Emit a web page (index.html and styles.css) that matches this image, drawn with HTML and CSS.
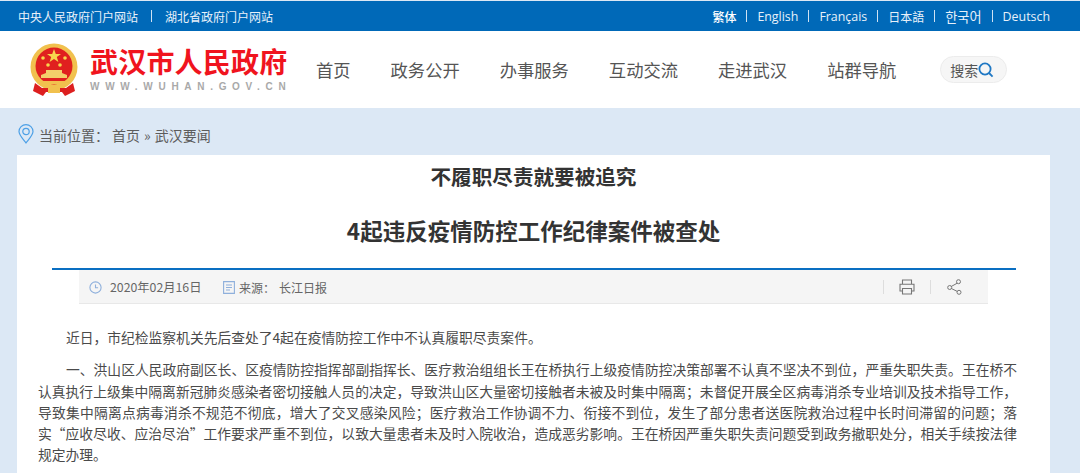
FILE: index.html
```html
<!DOCTYPE html>
<html lang="zh-CN">
<head>
<meta charset="utf-8">
<title>不履职尽责就要被追究</title>
<link rel="stylesheet" href="styles.css">
</head>
<body>
<div class="topbar">
  <div class="top-left"><a>中央人民政府门户网站</a><i class="bar"></i><a>湖北省政府门户网站</a></div>
  <div class="top-right"><a class="b">繁体</a><i class="bar"></i><a>English</a><i class="bar"></i><a>Français</a><i class="bar"></i><a class="jp">日本語</a><i class="bar"></i><a class="kr">한국어</a><i class="bar"></i><a>Deutsch</a></div>
</div>
<header class="header">
  <div class="logo">
    <svg class="emblem" width="50" height="54" viewBox="0 0 50 54">
      <circle cx="25" cy="24" r="23.5" fill="#f1c14e"/>
      <circle cx="25" cy="23" r="18.5" fill="#e0201f"/>
      <polygon points="25,6 26.8,11 32,11 27.8,14 29.4,19 25,16 20.6,19 22.2,14 18,11 23.2,11" fill="#f7d64d"/>
      <circle cx="14" cy="15" r="1.8" fill="#f7d64d"/><circle cx="36" cy="15" r="1.8" fill="#f7d64d"/>
      <circle cx="19" cy="22" r="1.8" fill="#f7d64d"/><circle cx="31" cy="22" r="1.8" fill="#f7d64d"/>
      <path d="M12 35h26v-3l-5-2v-3H17v3l-5 2z" fill="#f3cf6a"/>
      <path d="M9 38h32v3H9z" fill="#f1c14e"/>
      <path d="M6 40l7 5h24l7-5 2 8-10 5-3-4H17l-3 4-10-5z" fill="#dd1f1f"/>
      <path d="M19 44h12v6H19z" fill="#f1c14e"/>
    </svg>
    <div class="logo-text">
      <div class="logo-cn">武汉市人民政府</div>
      <div class="logo-en">WWW.WUHAN.GOV.CN</div>
    </div>
  </div>
  <nav class="nav"><a>首页</a><a>政务公开</a><a>办事服务</a><a>互动交流</a><a>走进武汉</a><a>站群导航</a></nav>
  <div class="search">
    <span>搜索</span>
    <svg width="16" height="16" viewBox="0 0 16 16" fill="none" stroke="#1f78c4" stroke-width="1.8"><circle cx="7" cy="7" r="5.6"/><path d="M11 11l3.6 3.6"/></svg>
  </div>
</header>
<div class="crumb">
  <svg width="16" height="20" viewBox="0 0 16 20" fill="none" stroke="#4da0e6" stroke-width="1.2"><path d="M8 19C4 14 1 11 1 7.6a7 7 0 0 1 14 0C15 11 12 14 8 19z"/><circle cx="8" cy="7.5" r="3.2"/></svg>
  <span class="crumb-label">当前位置：</span><span>首页</span><span class="crumb-gt">»</span><span>武汉要闻</span>
</div>
<main class="card">
  <h1 class="t1">不履职尽责就要被追究</h1>
  <h1 class="t2">4起违反疫情防控工作纪律案件被查处</h1>
  <div class="meta">
    <div class="meta-left">
      <svg class="ic-clock" width="13" height="13" viewBox="0 0 13 13" fill="none" stroke="#8fb0dc" stroke-width="1.1"><circle cx="6.5" cy="6.5" r="5.6"/><path d="M6.5 3.4v3.4h2.6"/></svg>
      <span class="date">2020年02月16日</span>
      <svg class="ic-doc" width="12" height="13" viewBox="0 0 12 13" fill="none" stroke="#8fb0dc" stroke-width="1.1"><path d="M.6.6h10.8v11.8H.6zM3 4h6M3 6.5h6M3 9h4"/></svg>
      <span class="src-label">来源：</span><span>长江日报</span>
    </div>
    <div class="meta-right">
      <i class="sep"></i>
      <svg class="ic-print" width="16" height="16" viewBox="0 0 16 16" fill="none" stroke="#777" stroke-width="1.1"><path d="M3.5 5V1h9v4M3.5 12H1V5.2h14V12h-2.500M3.500 9.500h9v5.500h-9z"/></svg>
      <i class="sep"></i>
      <svg class="ic-share" width="15" height="16" viewBox="0 0 15 16" fill="none" stroke="#777" stroke-width="1"><circle cx="11.500" cy="2.700" r="2"/><circle cx="2.700" cy="8.500" r="2"/><circle cx="12" cy="13.300" r="2"/><path d="M10 4.300L4.200 7.500M4.400 9.500l5.800 2.900"/></svg>
    </div>
  </div>
  <article class="body">
    <p>近日，市纪检监察机关先后查处了4起在疫情防控工作中不认真履职尽责案件。</p>
    <p>一、洪山区人民政府副区长、区疫情防控指挥部副指挥长、医疗救治组组长王在桥执行上级疫情防控决策部署不认真不坚决不到位，严重失职失责。王在桥不认真执行上级集中隔离新冠肺炎感染者密切接触人员的决定，导致洪山区大量密切接触者未被及时集中隔离；未督促开展全区病毒消杀专业培训及技术指导工作，导致集中隔离点病毒消杀不规范不彻底，增大了交叉感染风险；医疗救治工作协调不力、衔接不到位，发生了部分患者送医院救治过程中长时间滞留的问题；落实&#8288;“应收尽收、应治尽治”工作要求严重不到位，以致大量患者未及时入院收治，造成恶劣影响。王在桥因严重失职失责问题受到政务撤职处分，相关手续按法律规定办理。</p>
  </article>
</main>
</body>
</html>
```
FILE: styles.css
```css
html, body { margin: 0; padding: 0; height: 473px; overflow: hidden; }
body { background: #dce8f5; font-family: "Noto Sans CJK SC", "Liberation Sans", sans-serif; color: #555; }
.topbar { margin-top: 1px; height: 30px; background: #0069b8; color: #e8f1fa; font-size: 12px; display: flex; justify-content: space-between; align-items: center; padding: 0 30px 0 18px; }
.top-left, .top-right { display: flex; align-items: center; }
.bar { width: 1px; height: 12px; background: #cfe2f3; }
.top-left .bar { margin: 0 13px; }
.top-right .bar { margin: 0 10px; }
.top-right a { font-family: "Open Sans", "Noto Sans CJK SC", sans-serif; font-size: 12.400px; }
.top-right a.b { font-family: "Noto Sans CJK SC", sans-serif; font-size: 12px; font-weight: 500; color: #fff; }
.top-right a.jp { font-family: "Noto Sans CJK JP", sans-serif; font-size: 12px; }
.top-right a.kr { font-family: "Noto Sans CJK KR", sans-serif; font-size: 13.200px; }
.header { height: 77px; background: #fff; display: flex; align-items: center; }
.logo { display: flex; align-items: center; margin-left: 29px; width: 287px; flex: none; }
.emblem { flex: none; margin-top: 1px; }
.logo-text { margin-left: 11px; }
.logo-cn { color: #f0141e; font-size: 28px; line-height: 32px; font-weight: 700; letter-spacing: .2px; white-space: nowrap; }
.logo-en { color: #a9a9a9; font-size: 10px; line-height: 14px; margin-top: 3px; font-weight: 700; font-family: "Liberation Sans", sans-serif; letter-spacing: 5.700px; white-space: nowrap; }
.nav { display: flex; gap: 40px; font-size: 17.300px; color: #555; white-space: nowrap; }
.search { margin-left: 44px; width: 67px; height: 27px; box-sizing: border-box; border: 1px solid #ececec; border-radius: 14px; background: #f6f6f6; display: flex; align-items: center; padding-left: 9px; font-size: 14px; color: #555; }
.crumb { height: 47px; box-sizing: border-box; padding: 7px 0 0 18px; display: flex; align-items: center; font-size: 14px; color: #5c5c5c; }
.crumb svg { margin-right: 5px; margin-top: -2px; }
.crumb-label { margin-right: 3px; }
.crumb-gt { margin: 0 4px; }
.card { margin: 0 30px 0 17px; background: #fff; height: 318px; padding-top: 7px; box-sizing: border-box; }
.t1, .t2 { margin: 0; text-align: center; color: #333; font-weight: 700; white-space: nowrap; }
.t1 { font-size: 20.600px; line-height: 28px; }
.t2 { font-size: 22.500px; line-height: 32px; margin-top: 24px; }
.meta { margin: 22px 34px 0 35px; border-top: 2px solid #0a6fc2; height: 34px; padding: 0 28px 0 27px; display: flex; justify-content: space-between; position: relative; }
.meta::before { content: ""; position: absolute; left: 27px; right: 28px; top: 0; bottom: 0; background: #f5f5f5; border-bottom: 1px solid #e8e8e8; }
.meta-left, .meta-right { position: relative; display: flex; align-items: center; font-size: 12px; color: #666; }
.ic-clock { margin-left: 10px; margin-right: 8px; }
.date { width: 113px; font-size: 12.300px; }
.ic-doc { margin-right: 4px; }
.src-label { margin-right: 4px; }
.meta-right { padding-right: 26px; }
.sep { width: 1px; height: 14px; background: #ddd; }
.ic-print { margin: 0 15px; }
.ic-share { margin-left: 16px; }
.body { padding: 0 33px 0 21px; margin-top: 23px; font-size: 13.770px; line-height: 21.300px; color: #4a4a4a; text-spacing-trim: space-all; }
.body p { margin: 0 0 11px; text-indent: 28px; text-align: justify; }
```
